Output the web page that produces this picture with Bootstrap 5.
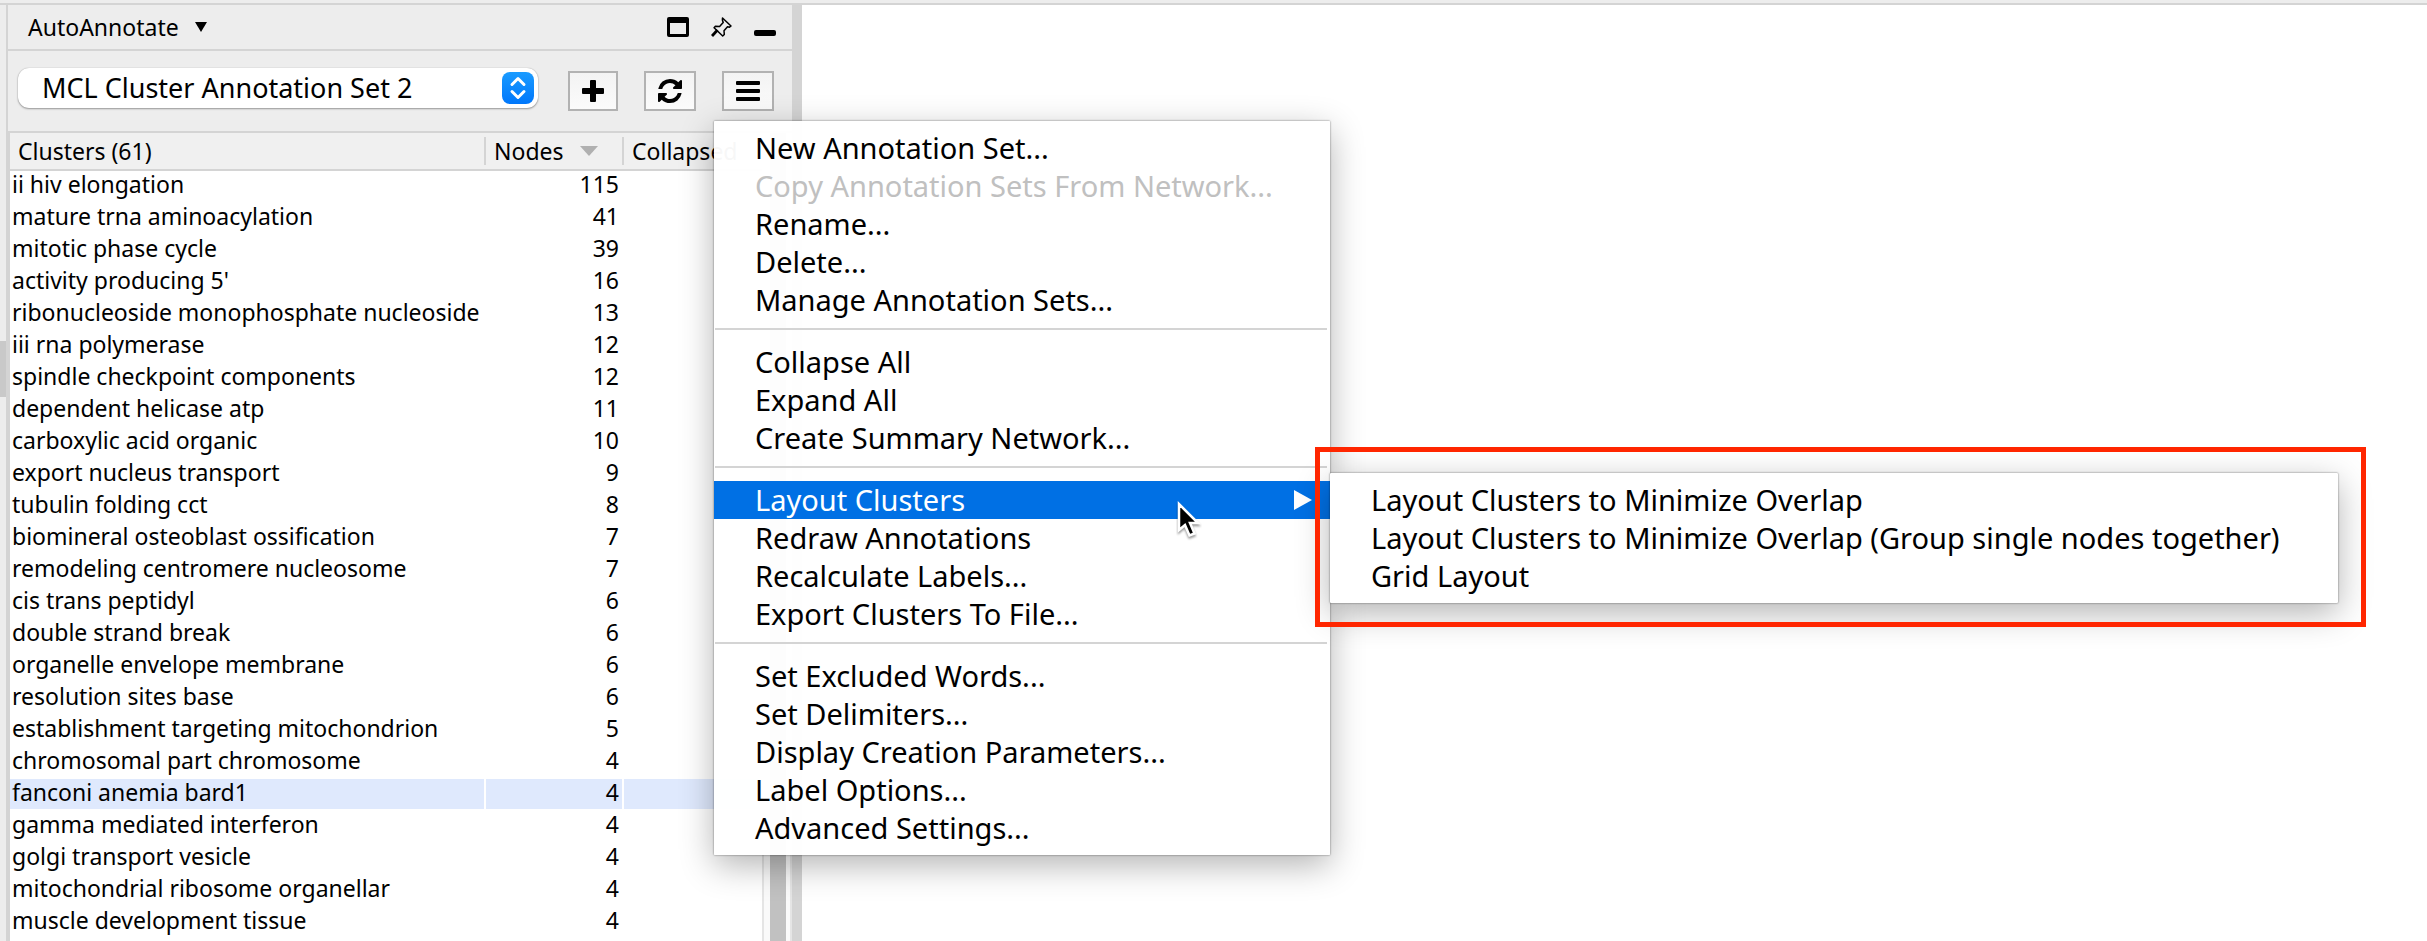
<!DOCTYPE html>
<html lang="en">
<head>
<meta charset="utf-8">
<meta name="viewport" content="width=device-width, initial-scale=1">
<title>AutoAnnotate</title>
<link href="https://cdn.jsdelivr.net/npm/bootstrap@5.3.0/dist/css/bootstrap.min.css" rel="stylesheet">
<style>
  :root { --line: #d4d4d4; --chrome: #ededed; }
  body { font: 23px/32px "Noto Sans", "Open Sans", sans-serif; color: #000; background: #fff; }
  .top-strip { height: 5px; background: var(--chrome); border-bottom: 2px solid var(--line); }
  .dock { width: 8px; background: var(--chrome); border-right: 2px solid var(--line); padding-top: 336px; }
  .dock-grip { height: 56px; background: #c9c9c9; }
  .side-panel { width: 784px; background: var(--chrome); }
  .title-bar { height: 46px; border-bottom: 2px solid var(--line); padding: 0 16px 0 20px; }
  .title-btn { border: 0; background: none; color: #000; padding: 0; line-height: 44px; }
  .title-icons { gap: 22px; }
  .tool-bar { height: 82px; gap: 26px; padding: 17px 18px 0 10px; border-bottom: 2px solid var(--line); }
  .set-picker { width: 520px; }
  .set-picker select { appearance: none; width: 100%; height: 40px; border: 0; border-radius: 11px; background: #fff;
    padding: 0 48px 0 24px; font-size: 27px; line-height: 38px; color: #000;
    box-shadow: 0 1px 2px rgba(0,0,0,.35), 0 0 1px rgba(0,0,0,.3); }
  .set-picker svg { position: absolute; right: 4px; top: 4px; pointer-events: none; }
  .tool-btn { width: 52px; height: 40px; margin-top: 3px; border: 2px solid #b2b2b2; background: linear-gradient(#f3f3f3, #fbfbfb); padding: 0; color: #000; }
  .tool-btn.add { width: 50px; }
  .list-area { border-left: 2px solid var(--line); background: #fff; min-height: 0; }
  .cluster-table { table-layout: fixed; border-collapse: separate; border-spacing: 0; color: #000; margin: 0; }
  .cluster-table th { padding: 0; border-bottom: 2px solid var(--line); background: #f0f0f0; font-weight: 400; height: 38px; vertical-align: middle; }
  .head-cell { height: 28px; padding-left: 8px; border-right: 2px solid var(--line); }
  .cluster-table th:last-child .head-cell { border: 0; }
  .cluster-table td { padding: 0 3px 4px 2px; line-height: 26px; height: 32px; white-space: nowrap; border: solid #fff; border-width: 0 2px 2px 0; background-clip: padding-box; }
  .cluster-table .picked td { background-color: #dfe9fd; }
  .col-name { width: 476px; }
  .col-nodes { width: 138px; }
  .scroll-track { width: 30px; background: #fafafa; border: solid #e5e5e5; border-width: 0 2px; }
  .scroll-thumb { width: 16px; margin-left: 6px; background: #c1c1c1; }
  .splitter { width: 10px; background: var(--line); }
  .pop-menu { --bs-dropdown-link-active-bg: #0070e4; position: absolute; border: 0; border-radius: 1px; margin: 0; padding: 8px 0; font-size: 29px;
    background: rgba(255,255,255,.97); color: #000;
    box-shadow: 0 0 2px rgba(0,0,0,.6), 0 10px 34px rgba(0,0,0,.3); }
  .pop-menu .dropdown-item { height: 38px; line-height: 38px; padding: 0 18px 0 41px; color: #000; }
  .pop-menu .dropdown-item.disabled { color: #c0c0c0; }
  .pop-menu .dropdown-item.active { color: #fff; }
  .pop-menu .dropdown-divider { margin: 9px 3px 13px 1px; border-top: 2px solid var(--line); opacity: 1; }
  .main-menu { width: 616px; top: 53px; left: -8px; }
  .sub-menu { width: 1008px; top: -8px; left: 100%; background: #fff; }
  .callout-box { position: absolute; inset: -26px -28px -24px -15px; border: 5px solid #ff2600; pointer-events: none; }
  .pointer { position: absolute; left: 462px; top: 20px; pointer-events: none; z-index: 2; }
</style>
</head>
<body class="vh-100 overflow-hidden d-flex flex-column">
<div class="top-strip flex-shrink-0"></div>
<div class="d-flex flex-grow-1">
  <div class="dock flex-shrink-0"><div class="dock-grip"></div></div>
  <section class="side-panel flex-shrink-0 d-flex flex-column" aria-label="AutoAnnotate">
    <header class="title-bar d-flex align-items-center flex-shrink-0">
      <button type="button" class="title-btn d-flex align-items-center gap-3 me-auto">AutoAnnotate
        <svg width="12" height="10" viewBox="0 0 12 10" aria-hidden="true"><path d="M0 0h12L6 10z"/></svg>
      </button>
      <div class="title-icons d-flex align-items-center">
        <button type="button" class="title-btn d-flex" aria-label="Float"><svg width="22" height="20" viewBox="0 0 22 20"><path fill-rule="evenodd" d="M2 0h18a2 2 0 0 1 2 2v16a2 2 0 0 1-2 2H2a2 2 0 0 1-2-2V2a2 2 0 0 1 2-2zm1 6v11h16V6z"/></svg></button>
        <button type="button" class="title-btn d-flex" aria-label="Pin"><svg width="21" height="20" viewBox="0 0 21 20"><path d="M11.500 1 20 9l-1.500 1.200-2-.4-3.500 4 .3 3.700-1.600 1.500-8.600-8.200 1.300-1.600 4.200.3 3.600-4-.8-2.500z" fill="none" stroke="#000" stroke-width="1.500" stroke-linejoin="round"/><path d="M6.500 13 1 19" stroke="#000" stroke-width="2.800"/></svg></button>
        <button type="button" class="title-btn d-flex" aria-label="Minimize"><svg width="22" height="20" viewBox="0 0 22 20"><rect y="13" width="22" height="6" rx="2"/></svg></button>
      </div>
    </header>
    <div class="tool-bar d-flex align-items-start flex-shrink-0">
      <div class="set-picker position-relative me-1">
        <select aria-label="Annotation set"><option>MCL Cluster Annotation Set 2</option></select>
        <svg width="32" height="32" viewBox="0 0 32 32" aria-hidden="true"><defs><linearGradient id="g" x2="0" y2="1"><stop stop-color="#1a9bff"/><stop offset="1" stop-color="#0077fb"/></linearGradient></defs><rect width="32" height="32" rx="8" fill="url(#g)"/><path d="m10 12.500 6-6 6 6M10 19.500l6 6 6-6" fill="none" stroke="#fff" stroke-width="3" stroke-linecap="round" stroke-linejoin="round"/></svg>
      </div>
      <button type="button" class="tool-btn add d-flex align-items-center justify-content-center" aria-label="Add"><svg width="22" height="22" viewBox="0 0 22 22"><path d="M9 0h4a1 1 0 0 1 1 1v7h7a1 1 0 0 1 1 1v4a1 1 0 0 1-1 1h-7v7a1 1 0 0 1-1 1H9a1 1 0 0 1-1-1v-7H1a1 1 0 0 1-1-1V9a1 1 0 0 1 1-1h7V1a1 1 0 0 1 1-1z"/></svg></button>
      <button type="button" class="tool-btn d-flex align-items-center justify-content-center" aria-label="Refresh"><svg width="24" height="24" viewBox="0 0 1536 1536"><path d="M1511 928q0 5-1 7-64 268-268 434.500T764 1536q-146 0-282.500-55T238 1324l-129 129q-19 19-45 19t-45-19-19-45V960q0-26 19-45t45-19h448q26 0 45 19t19 45-19 45l-137 137q71 66 161 102t187 36q134 0 250-65t186-179q11-17 53-117 8-23 30-23h192q13 0 22.500 9.500t9.500 22.500zm25-800v448q0 26-19 45t-45 19h-448q-26 0-45-19t-19-45 19-45l138-138Q969 256 768 256q-134 0-250 65T332 500q-11 17-53 117-8 23-30 23H50q-13 0-22.500-9.500T18 608v-7q65-268 270-434.500T768 0q146 0 284 55.500T1297 212l130-129q19-19 45-19t45 19 19 45z"/></svg></button>
      <div class="dropdown">
        <button type="button" class="tool-btn d-flex align-items-center justify-content-center" aria-label="Menu" aria-expanded="true"><svg width="24" height="20" viewBox="0 0 24 20"><path d="M1 0h22a1 1 0 0 1 1 1v2a1 1 0 0 1-1 1H1a1 1 0 0 1-1-1V1a1 1 0 0 1 1-1zM1 8h22a1 1 0 0 1 1 1v2a1 1 0 0 1-1 1H1a1 1 0 0 1-1-1V9a1 1 0 0 1 1-1zM1 16h22a1 1 0 0 1 1 1v2a1 1 0 0 1-1 1H1a1 1 0 0 1-1-1v-2a1 1 0 0 1 1-1z"/></svg></button>
        <ul class="dropdown-menu show pop-menu main-menu">
          <li><button type="button" class="dropdown-item">New Annotation Set...</button></li>
          <li><button type="button" class="dropdown-item disabled" disabled>Copy Annotation Sets From Network...</button></li>
          <li><button type="button" class="dropdown-item">Rename...</button></li>
          <li><button type="button" class="dropdown-item">Delete...</button></li>
          <li><button type="button" class="dropdown-item">Manage Annotation Sets...</button></li>
          <li><hr class="dropdown-divider"></li>
          <li><button type="button" class="dropdown-item">Collapse All</button></li>
          <li><button type="button" class="dropdown-item">Expand All</button></li>
          <li><button type="button" class="dropdown-item">Create Summary Network...</button></li>
          <li><hr class="dropdown-divider"></li>
          <li class="position-relative">
            <button type="button" class="dropdown-item active d-flex align-items-center justify-content-between" aria-expanded="true">Layout Clusters
              <svg width="18" height="20" viewBox="0 0 18 20" aria-hidden="true"><path d="M0 0v20l18-10z" fill="#fff"/></svg>
            </button>
            <div class="pop-menu sub-menu">
              <button type="button" class="dropdown-item">Layout Clusters to Minimize Overlap</button>
              <button type="button" class="dropdown-item">Layout Clusters to Minimize Overlap (Group single nodes together)</button>
              <button type="button" class="dropdown-item">Grid Layout</button>
              <div class="callout-box"></div>
            </div>
            <svg class="pointer" width="26" height="40" viewBox="0 0 26 40" aria-hidden="true"><path d="M3 3v26l6-5 4.500 10.500 5-2L14 22h8z" fill="#000" stroke="#fff" stroke-width="2.500" style="filter:drop-shadow(0 2px 1px rgba(0,0,0,.4))"/></svg>
          </li>
          <li><button type="button" class="dropdown-item">Redraw Annotations</button></li>
          <li><button type="button" class="dropdown-item">Recalculate Labels...</button></li>
          <li><button type="button" class="dropdown-item">Export Clusters To File...</button></li>
          <li><hr class="dropdown-divider"></li>
          <li><button type="button" class="dropdown-item">Set Excluded Words...</button></li>
          <li><button type="button" class="dropdown-item">Set Delimiters...</button></li>
          <li><button type="button" class="dropdown-item">Display Creation Parameters...</button></li>
          <li><button type="button" class="dropdown-item">Label Options...</button></li>
          <li><button type="button" class="dropdown-item">Advanced Settings...</button></li>
        </ul>
      </div>
    </div>
    <div class="list-area d-flex flex-grow-1 overflow-hidden">
      <div class="flex-grow-1 overflow-hidden">
        <table class="table cluster-table">
          <colgroup><col class="col-name"><col class="col-nodes"><col></colgroup>
          <thead><tr>
            <th scope="col"><div class="head-cell d-flex align-items-center">Clusters (61)</div></th>
            <th scope="col"><div class="head-cell d-flex align-items-center justify-content-between pe-4">Nodes <svg width="18" height="10" viewBox="0 0 18 10" aria-hidden="true"><path d="M0 0h18L9 10z" fill="#b0b0b0"/></svg></div></th>
            <th scope="col"><div class="head-cell d-flex align-items-center">Collapsed</div></th>
          </tr></thead>
          <tbody>
            <tr><td>ii hiv elongation</td><td class="text-end">115</td><td></td></tr>
            <tr><td>mature trna aminoacylation</td><td class="text-end">41</td><td></td></tr>
            <tr><td>mitotic phase cycle</td><td class="text-end">39</td><td></td></tr>
            <tr><td>activity producing 5'</td><td class="text-end">16</td><td></td></tr>
            <tr><td>ribonucleoside monophosphate nucleoside</td><td class="text-end">13</td><td></td></tr>
            <tr><td>iii rna polymerase</td><td class="text-end">12</td><td></td></tr>
            <tr><td>spindle checkpoint components</td><td class="text-end">12</td><td></td></tr>
            <tr><td>dependent helicase atp</td><td class="text-end">11</td><td></td></tr>
            <tr><td>carboxylic acid organic</td><td class="text-end">10</td><td></td></tr>
            <tr><td>export nucleus transport</td><td class="text-end">9</td><td></td></tr>
            <tr><td>tubulin folding cct</td><td class="text-end">8</td><td></td></tr>
            <tr><td>biomineral osteoblast ossification</td><td class="text-end">7</td><td></td></tr>
            <tr><td>remodeling centromere nucleosome</td><td class="text-end">7</td><td></td></tr>
            <tr><td>cis trans peptidyl</td><td class="text-end">6</td><td></td></tr>
            <tr><td>double strand break</td><td class="text-end">6</td><td></td></tr>
            <tr><td>organelle envelope membrane</td><td class="text-end">6</td><td></td></tr>
            <tr><td>resolution sites base</td><td class="text-end">6</td><td></td></tr>
            <tr><td>establishment targeting mitochondrion</td><td class="text-end">5</td><td></td></tr>
            <tr><td>chromosomal part chromosome</td><td class="text-end">4</td><td></td></tr>
            <tr class="picked"><td>fanconi anemia bard1</td><td class="text-end">4</td><td></td></tr>
            <tr><td>gamma mediated interferon</td><td class="text-end">4</td><td></td></tr>
            <tr><td>golgi transport vesicle</td><td class="text-end">4</td><td></td></tr>
            <tr><td>mitochondrial ribosome organellar</td><td class="text-end">4</td><td></td></tr>
            <tr><td>muscle development tissue</td><td class="text-end">4</td><td></td></tr>
          </tbody>
        </table>
      </div>
      <div class="scroll-track flex-shrink-0 d-flex"><div class="scroll-thumb"></div></div>
    </div>
  </section>
  <div class="splitter flex-shrink-0"></div>
  <main class="flex-grow-1"></main>
</div>
<script src="https://cdn.jsdelivr.net/npm/bootstrap@5.3.0/dist/js/bootstrap.bundle.min.js"></script>
</body>
</html>
